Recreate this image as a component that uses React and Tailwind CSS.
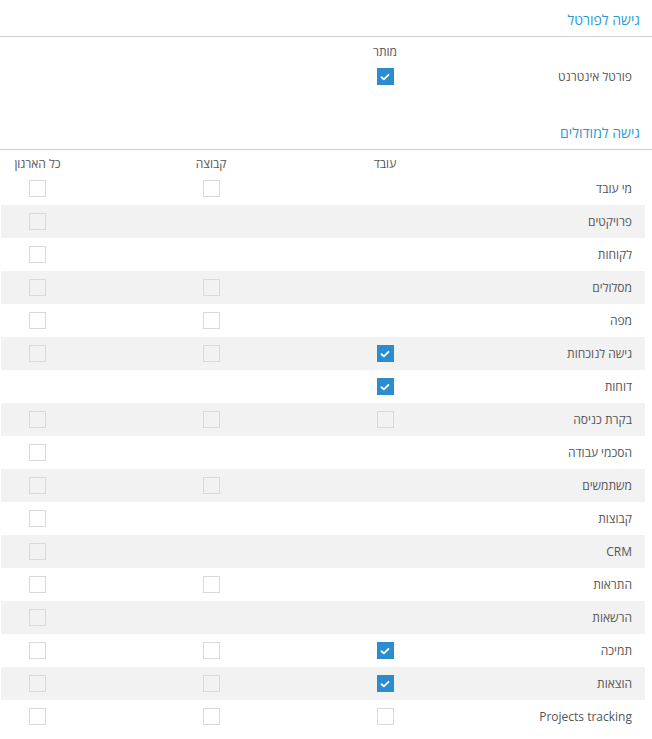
import React from "react";

const COLS = "grid grid-cols-[223px_74px_100px_74px_100px_1fr] items-center";

const modules = [
  { name: "מי עובד", org: false, group: false },
  { name: "פרויקטים", org: false },
  { name: "לקוחות", org: false },
  { name: "מסלולים", org: false, group: false },
  { name: "מפה", org: false, group: false },
  { name: "גישה לנוכחות", org: false, group: false, worker: true },
  { name: "דוחות", worker: true },
  { name: "בקרת כניסה", org: false, group: false, worker: false },
  { name: "הסכמי עבודה", org: false },
  { name: "משתמשים", org: false, group: false },
  { name: "קבוצות", org: false },
  { name: "CRM", org: false },
  { name: "התראות", org: false, group: false },
  { name: "הרשאות", org: false },
  { name: "תמיכה", org: false, group: false, worker: true },
  { name: "הוצאות", org: false, group: false, worker: true },
  { name: "Projects tracking", org: false, group: false, worker: false },
];

function Box({ checked }) {
  if (checked === undefined) return <span />;
  if (checked) {
    return (
      <span className="flex h-[17px] w-[17px] items-center justify-center bg-[#2b8ccf]">
        <svg width="10" height="8" viewBox="0 0 10 8" fill="none">
          <path d="M1.5 4.2 L3.9 6.3 L8.5 1.8" stroke="white" strokeWidth="1.8" strokeLinecap="round" strokeLinejoin="round" />
        </svg>
      </span>
    );
  }
  return <span className="block h-[17px] w-[17px] border border-[#d9d9d9]" />;
}

function SectionTitle({ children, className = "" }) {
  return (
    <div className={`-ml-[1px] -mr-[7px] border-b border-[#cfcfcf] pb-[6px] pr-[12px] text-[14px] leading-[20px] text-[#2a9ad4] ${className}`}>
      {children}
    </div>
  );
}

export default function App() {
  return (
    <div dir="rtl" className="w-[652px] bg-white pl-[1px] pr-[7px] text-[12px] text-[#555] font-['Open_Sans','Noto_Sans',sans-serif]">
      <SectionTitle className="pt-[10px]">גישה לפורטל</SectionTitle>

      <div className={`${COLS} mt-[7px] h-[16px] leading-[16px] justify-items-center`}>
        <span />
        <span>מותר</span>
      </div>
      <div className={`${COLS} h-[33px] justify-items-center`}>
        <span className="justify-self-start pr-[13px]">פורטל אינטרנט</span>
        <Box checked />
      </div>

      <SectionTitle className="mt-[30px]">גישה למודולים</SectionTitle>

      <div className={`${COLS} mt-[6px] h-[16px] leading-[16px] justify-items-center`}>
        <span />
        <span>עובד</span>
        <span />
        <span>קבוצה</span>
        <span />
        <span>כל הארגון</span>
      </div>

      <div>
        {modules.map((m, i) => (
          <div
            key={m.name}
            className={`${COLS} h-[33px] justify-items-center ${i % 2 === 1 ? "bg-[#f2f2f2]" : ""}`}
          >
            <span className="justify-self-start pr-[13px]">{m.name}</span>
            <Box checked={m.worker} />
            <span />
            <Box checked={m.group} />
            <span />
            <Box checked={m.org} />
          </div>
        ))}
      </div>
    </div>
  );
}
